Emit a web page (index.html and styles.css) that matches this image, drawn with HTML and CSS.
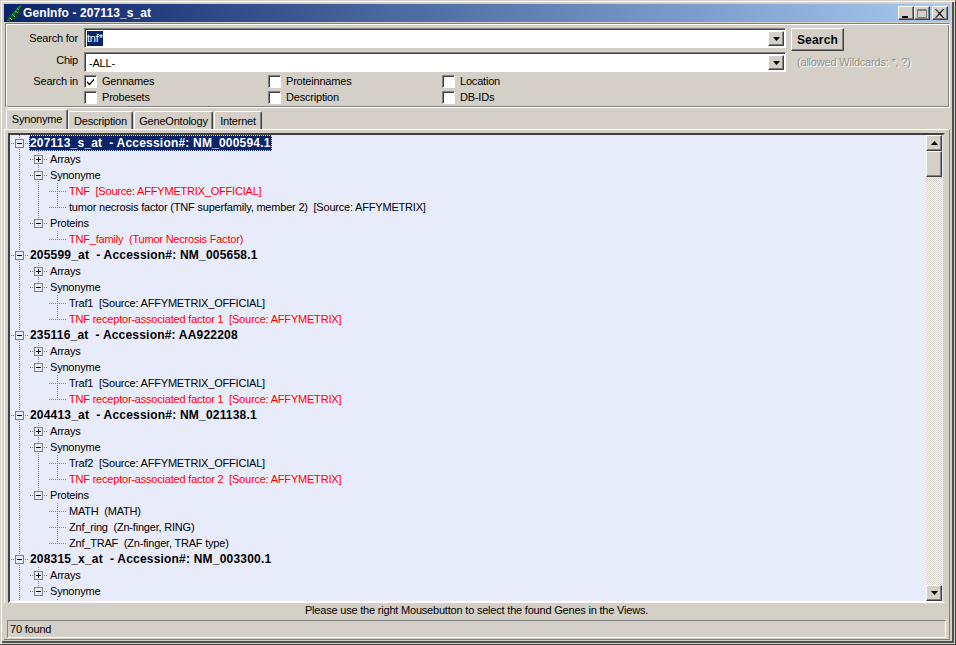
FILE: index.html
```html
<!DOCTYPE html>
<html>
<head>
<meta charset="utf-8">
<title>GenInfo - 207113_s_at</title>
<link rel="stylesheet" href="styles.css">
</head>
<body>
<div class="window">
  <div class="titlebar">
    <svg class="appicon" width="15" height="17" viewBox="0 0 15 17">
      <path d="M1 16C2 12 5 12 7 9S10 3 14 1" fill="none" stroke="#16782a" stroke-width="2.4"/>
      <path d="M2 11C5 10 5 15 8 13S10 6 14 5" fill="none" stroke="#0c4a1a" stroke-width="2"/>
      <path d="M3 13l2 2M5 9l3 3M8 6l3 2M10 3l2 2" stroke="#4fc45c" stroke-width="1"/>
    </svg>
    <span class="titletext">GenInfo - 207113_s_at</span>
    <div class="wincontrols">
      <span class="winbtn"><svg width="10" height="9" viewBox="0 0 10 9"><rect x="1" y="7" width="6" height="2" fill="#000"/></svg></span>
      <span class="winbtn"><svg width="10" height="9" viewBox="0 0 10 9"><path d="M0.5 0.5h9v8h-9zM0.5 1.5h9" fill="none" stroke="#808080"/></svg></span>
      <span class="winbtn closebtn"><svg width="10" height="9" viewBox="0 0 10 9"><path d="M1 0l3.5 3.5L8 0h1.5L5.3 4.5 9.5 9H8L4.5 5.5 1 9H0l3.8-4.5L0 0z" fill="#000"/></svg></span>
    </div>
  </div>

  <div class="searchpanel">
    <div class="formrow row-search">
      <label class="fieldlabel">Search for</label>
      <div class="combo">
        <span class="combotext"><span class="selected-input">tnf*</span></span>
        <span class="combobtn"><svg width="7" height="4" viewBox="0 0 7 4"><path d="M0 0h7L3.5 4z" fill="#000"/></svg></span>
      </div>
      <button class="searchbtn">Search</button>
    </div>
    <div class="formrow row-chip">
      <label class="fieldlabel chiplabel">Chip</label>
      <div class="combo combo-chip">
        <span class="combotext chiptext">-ALL-</span>
        <span class="combobtn"><svg width="7" height="4" viewBox="0 0 7 4"><path d="M0 0h7L3.5 4z" fill="#000"/></svg></span>
      </div>
      <span class="hint">(allowed Wildcards: *, ?)</span>
    </div>
    <div class="formrow row-checks">
      <label class="fieldlabel searchin">Search in</label>
      <div class="checkgrid">
        <span class="check"><span class="box"><svg width="9" height="9" viewBox="0 0 9 9"><path d="M1 4l2.5 2.5L8 1.5v2L3.5 8.5 1 6z" fill="#000"/></svg></span>Gennames</span>
        <span class="check"><span class="box"></span>Proteinnames</span>
        <span class="check"><span class="box"></span>Location</span>
        <span class="check"><span class="box"></span>Probesets</span>
        <span class="check"><span class="box"></span>Description</span>
        <span class="check"><span class="box"></span>DB-IDs</span>
      </div>
    </div>
  </div>

  <div class="tabs">
    <span class="tab tab-active">Synonyme</span>
    <span class="tab tab-desc">Description</span>
    <span class="tab tab-onto">GeneOntology</span>
    <span class="tab tab-net">Internet</span>
  </div>

  <div class="tabpage">
    <div class="treebox">
      <div class="tree">
        <div class="row"><span class="c first"><i class="tb minus"></i></span><span class="text head sel">207113_s_at&nbsp; - Accession#: NM_000594.1</span></div>
        <div class="row"><span class="c v"></span><span class="c t"><i class="tb plus"></i></span><span class="text">Arrays</span></div>
        <div class="row"><span class="c v"></span><span class="c t"><i class="tb minus"></i></span><span class="text">Synonyme</span></div>
        <div class="row"><span class="c v"></span><span class="c v"></span><span class="c t"></span><span class="text red">TNF&nbsp; [Source: AFFYMETRIX_OFFICIAL]</span></div>
        <div class="row"><span class="c v"></span><span class="c v"></span><span class="c l"></span><span class="text">tumor necrosis factor (TNF superfamily, member 2)&nbsp; [Source: AFFYMETRIX]</span></div>
        <div class="row"><span class="c v"></span><span class="c l"><i class="tb minus"></i></span><span class="text">Proteins</span></div>
        <div class="row"><span class="c v"></span><span class="c"></span><span class="c l"></span><span class="text red">TNF_family&nbsp; (Tumor Necrosis Factor)</span></div>

        <div class="row"><span class="c t"><i class="tb minus"></i></span><span class="text head">205599_at&nbsp; - Accession#: NM_005658.1</span></div>
        <div class="row"><span class="c v"></span><span class="c t"><i class="tb plus"></i></span><span class="text">Arrays</span></div>
        <div class="row"><span class="c v"></span><span class="c l"><i class="tb minus"></i></span><span class="text">Synonyme</span></div>
        <div class="row"><span class="c v"></span><span class="c"></span><span class="c t"></span><span class="text">Traf1&nbsp; [Source: AFFYMETRIX_OFFICIAL]</span></div>
        <div class="row"><span class="c v"></span><span class="c"></span><span class="c l"></span><span class="text red">TNF receptor-associated factor 1&nbsp; [Source: AFFYMETRIX]</span></div>

        <div class="row"><span class="c t"><i class="tb minus"></i></span><span class="text head">235116_at&nbsp; - Accession#: AA922208</span></div>
        <div class="row"><span class="c v"></span><span class="c t"><i class="tb plus"></i></span><span class="text">Arrays</span></div>
        <div class="row"><span class="c v"></span><span class="c l"><i class="tb minus"></i></span><span class="text">Synonyme</span></div>
        <div class="row"><span class="c v"></span><span class="c"></span><span class="c t"></span><span class="text">Traf1&nbsp; [Source: AFFYMETRIX_OFFICIAL]</span></div>
        <div class="row"><span class="c v"></span><span class="c"></span><span class="c l"></span><span class="text red">TNF receptor-associated factor 1&nbsp; [Source: AFFYMETRIX]</span></div>

        <div class="row"><span class="c t"><i class="tb minus"></i></span><span class="text head">204413_at&nbsp; - Accession#: NM_021138.1</span></div>
        <div class="row"><span class="c v"></span><span class="c t"><i class="tb plus"></i></span><span class="text">Arrays</span></div>
        <div class="row"><span class="c v"></span><span class="c t"><i class="tb minus"></i></span><span class="text">Synonyme</span></div>
        <div class="row"><span class="c v"></span><span class="c v"></span><span class="c t"></span><span class="text">Traf2&nbsp; [Source: AFFYMETRIX_OFFICIAL]</span></div>
        <div class="row"><span class="c v"></span><span class="c v"></span><span class="c l"></span><span class="text red">TNF receptor-associated factor 2&nbsp; [Source: AFFYMETRIX]</span></div>
        <div class="row"><span class="c v"></span><span class="c l"><i class="tb minus"></i></span><span class="text">Proteins</span></div>
        <div class="row"><span class="c v"></span><span class="c"></span><span class="c t"></span><span class="text">MATH&nbsp; (MATH)</span></div>
        <div class="row"><span class="c v"></span><span class="c"></span><span class="c t"></span><span class="text">Znf_ring&nbsp; (Zn-finger, RING)</span></div>
        <div class="row"><span class="c v"></span><span class="c"></span><span class="c l"></span><span class="text">Znf_TRAF&nbsp; (Zn-finger, TRAF type)</span></div>

        <div class="row"><span class="c t"><i class="tb minus"></i></span><span class="text head">208315_x_at&nbsp; - Accession#: NM_003300.1</span></div>
        <div class="row"><span class="c v"></span><span class="c t"><i class="tb plus"></i></span><span class="text">Arrays</span></div>
        <div class="row"><span class="c v"></span><span class="c l"><i class="tb minus"></i></span><span class="text">Synonyme</span></div>
        <div class="row"><span class="c v"></span><span class="c"></span><span class="c t"></span></div>
      </div>
      <div class="scrollbar">
        <span class="sbbtn"><svg width="7" height="4" viewBox="0 0 7 4"><path d="M3.5 0L7 4H0z" fill="#000"/></svg></span>
        <span class="sbthumb"></span>
        <span class="sbtrack"></span>
        <span class="sbbtn"><svg width="7" height="4" viewBox="0 0 7 4"><path d="M0 0h7L3.5 4z" fill="#000"/></svg></span>
      </div>
    </div>
  </div>

  <div class="statusarea">
    <div class="message">Please use the right Mousebutton to select the found Genes in the Views.</div>
    <div class="statusbar">70 found</div>
  </div>
</div>
</body>
</html>
```
FILE: styles.css
```css
* { box-sizing: border-box; }
html, body { margin: 0; padding: 0; }
body {
  width: 956px;
  height: 645px;
  overflow: hidden;
  background: #d4d0c8;
  font-family: "Liberation Sans", Arial, sans-serif;
  font-size: 11px;
  letter-spacing: -0.2px;
  color: #000;
}
.window {
  width: 956px;
  height: 645px;
  padding: 3px 3px 0 3px;
  display: flex;
  flex-direction: column;
  border: 1px solid;
  border-color: #d4d0c8 #404040 #404040 #d4d0c8;
  box-shadow: inset 1px 1px 0 #fff, inset -1px -1px 0 #d4d0c8, inset -3px -3px 0 #505050;
}
.titlebar {
  height: 18px;
  margin-right: 2px;
  flex: none;
  display: flex;
  align-items: center;
  background: linear-gradient(90deg, #0a246a, #a6caf0);
  color: #fff;
  font-weight: bold;
  font-size: 12px;
  letter-spacing: 0.1px;
}
.appicon { margin-left: 3px; margin-right: 1px; flex: none; }
.titletext { flex: 1; }
.wincontrols { display: flex; margin-right: 2px; }
.winbtn {
  width: 16px;
  height: 14px;
  background: #d4d0c8;
  border: 1px solid;
  border-color: #fff #404040 #404040 #fff;
  box-shadow: inset -1px -1px 0 #808080;
  display: flex;
  align-items: center;
  justify-content: center;
}
.closebtn { margin-left: 2px; }
.searchpanel {
  height: 85px;
  margin: 1px 2px 0 1px;
  flex: none;
  border: 1px solid;
  border-color: #808080 #fff #fff #808080;
  box-shadow: inset 1px 1px 0 #fff, inset -1px -1px 0 #808080;
  padding: 4px 0 0 0;
  display: flex;
  flex-direction: column;
}
.formrow { display: flex; }
.row-search { height: 24px; }
.row-chip { height: 21px; }
.fieldlabel {
  width: 72px;
  flex: none;
  text-align: right;
  line-height: 20px;
}
.chiplabel { line-height: 16px; }
.searchin { line-height: 16px; }
.combo {
  width: 702px;
  height: 20px;
  margin-left: 6px;
  flex: none;
  display: flex;
  background: #fff;
  border: 1px solid;
  border-color: #808080 #fff #fff #808080;
  box-shadow: inset 1px 1px 0 #404040;
  padding: 2px 1px 1px 2px;
}
.combotext { flex: 1; line-height: 15px; }
.chiptext { padding-left: 2px; padding-top: 1px; }
.selected-input { background: #0a246a; color: #fff; display: inline-block; height: 15px; }
.combobtn {
  width: 16px;
  flex: none;
  background: #d4d0c8;
  border: 1px solid;
  border-color: #fff #404040 #404040 #fff;
  box-shadow: inset -1px -1px 0 #808080;
  display: flex;
  align-items: center;
  justify-content: center;
}
.searchbtn {
  width: 53px;
  height: 23px;
  margin: 0 0 0 5px;
  padding: 0;
  background: #d4d0c8;
  border: 1px solid;
  border-color: #fff #404040 #404040 #fff;
  box-shadow: inset -1px -1px 0 #808080;
  font: bold 12px "Liberation Sans", Arial, sans-serif;
  letter-spacing: 0.2px;
  color: #000;
}
.hint {
  margin-left: 11px;
  line-height: 20px;
  color: #928f88;
  text-shadow: 1px 1px 0 #fff;
}
.checkgrid {
  margin-left: 6px;
  display: grid;
  grid-template-columns: 184px 174px 120px;
  grid-auto-rows: 16px;
}
.check { display: flex; align-items: center; }
.box {
  width: 13px;
  height: 13px;
  margin-right: 5px;
  flex: none;
  background: #fff;
  border: 1px solid;
  border-color: #808080 #fff #fff #808080;
  box-shadow: inset 1px 1px 0 #404040;
  display: flex;
  align-items: center;
  justify-content: center;
}
.tabs {
  height: 20px;
  margin-top: 1px;
  padding-left: 2px;
  flex: none;
  display: flex;
  align-items: flex-end;
}
.tab {
  height: 18px;
  line-height: 19px;
  text-align: center;
  border: 1px solid;
  border-bottom: 0;
  border-color: #fff #404040 transparent #fff;
  border-radius: 2px 2px 0 0;
  box-shadow: inset -1px 0 0 #808080;
}
.tab-active { width: 62px; height: 20px; line-height: 18px; }
.tab-desc { width: 65px; margin-right: 1px; }
.tab-onto { width: 79px; margin-right: 1px; }
.tab-net { width: 48px; }
.tabpage {
  height: 474px;
  margin-right: 2px;
  flex: none;
  padding: 3px 4px 0 3px;
  border-top: 1px solid #fff;
  border-left: 1px solid #fff;
  border-right: 1px solid #808080;
}
.treebox {
  height: 470px;
  display: flex;
  border: 2px solid;
  border-color: #404040 #d4d0c8 #fff #404040;
  background: #e8ebfa;
}
.tree { flex: 1; overflow: hidden; }
.row { height: 16px; display: flex; white-space: nowrap; }
.c {
  width: 19px;
  height: 16px;
  flex: none;
  background-repeat: no-repeat;
  display: flex;
  align-items: center;
}
.v {
  background-image: linear-gradient(#808080 50%, transparent 50%);
  background-size: 1px 2px;
  background-repeat: repeat-y;
  background-position: 9px 0;
}
.t {
  background-image:
    linear-gradient(#808080 50%, transparent 50%),
    linear-gradient(90deg, #808080 50%, transparent 50%);
  background-size: 1px 2px, 2px 1px;
  background-repeat: repeat-y, repeat-x;
  background-position: 9px 0, 9px 8px;
}
.l {
  background-image:
    linear-gradient(90deg, #808080 50%, transparent 50%),
    linear-gradient(#808080 50%, transparent 50%);
  background-size: 2px 1px, 1px 2px;
  background-repeat: repeat-x, repeat-y;
  background-position: 9px 8px, 9px 0;
  position: relative;
}
.l::after {
  content: "";
  position: absolute;
  left: 0;
  top: 9px;
  width: 100%;
  height: 7px;
  background: #e8ebfa;
}
.first {
  background-image:
    linear-gradient(#808080 50%, transparent 50%),
    linear-gradient(90deg, #808080 50%, transparent 50%);
  background-size: 1px 2px, 2px 1px;
  background-repeat: repeat-y, repeat-x;
  background-position: 9px 8px, 9px 8px;
}
.tb {
  width: 9px;
  height: 9px;
  margin-left: 5px;
  flex: none;
  background-color: #e8ebfa;
  border: 1px solid #808080;
  position: relative;
  z-index: 1;
  background-repeat: no-repeat;
}
.minus {
  background-image: linear-gradient(#000, #000);
  background-size: 5px 1px;
  background-position: 1px 3px;
}
.plus {
  background-image: linear-gradient(#000, #000), linear-gradient(#000, #000);
  background-size: 5px 1px, 1px 5px;
  background-position: 1px 3px, 3px 1px;
}
.text {
  margin-left: 1px;
  padding: 0 1px;
  line-height: 16px;
  height: 16px;
}
.red { color: #f00; }
.head { font-weight: bold; font-size: 12px; letter-spacing: 0.2px; margin-left: 0; padding-left: 1px; }
.sel {
  background: #0a246a;
  color: #fff;
  outline: 1px dotted #f0e080;
  outline-offset: -1px;
}
.scrollbar {
  width: 16px;
  flex: none;
  margin-right: 1px;
  display: flex;
  flex-direction: column;
}
.sbbtn, .sbthumb {
  flex: none;
  background: #d4d0c8;
  border: 1px solid;
  border-color: #fff #404040 #404040 #fff;
  box-shadow: inset -1px -1px 0 #808080;
}
.sbbtn {
  height: 16px;
  display: flex;
  align-items: center;
  justify-content: center;
}
.sbthumb { height: 26px; }
.sbtrack {
  flex: 1;
  background: repeating-conic-gradient(#d4d0c8 0 25%, #fff 0 50%) 0 0 / 2px 2px;
}
.statusarea {
  height: 37px;
  margin-right: 2px;
  flex: none;
  border-right: 1px solid #808080;
  border-bottom: 1px solid #808080;
}
.message {
  height: 17px;
  text-align: center;
  line-height: 14px;
}
.statusbar {
  height: 18px;
  margin: 0 3px;
  padding-left: 2px;
  line-height: 17px;
  border: 1px solid;
  border-color: #808080 #fff #fff #808080;
}
```
